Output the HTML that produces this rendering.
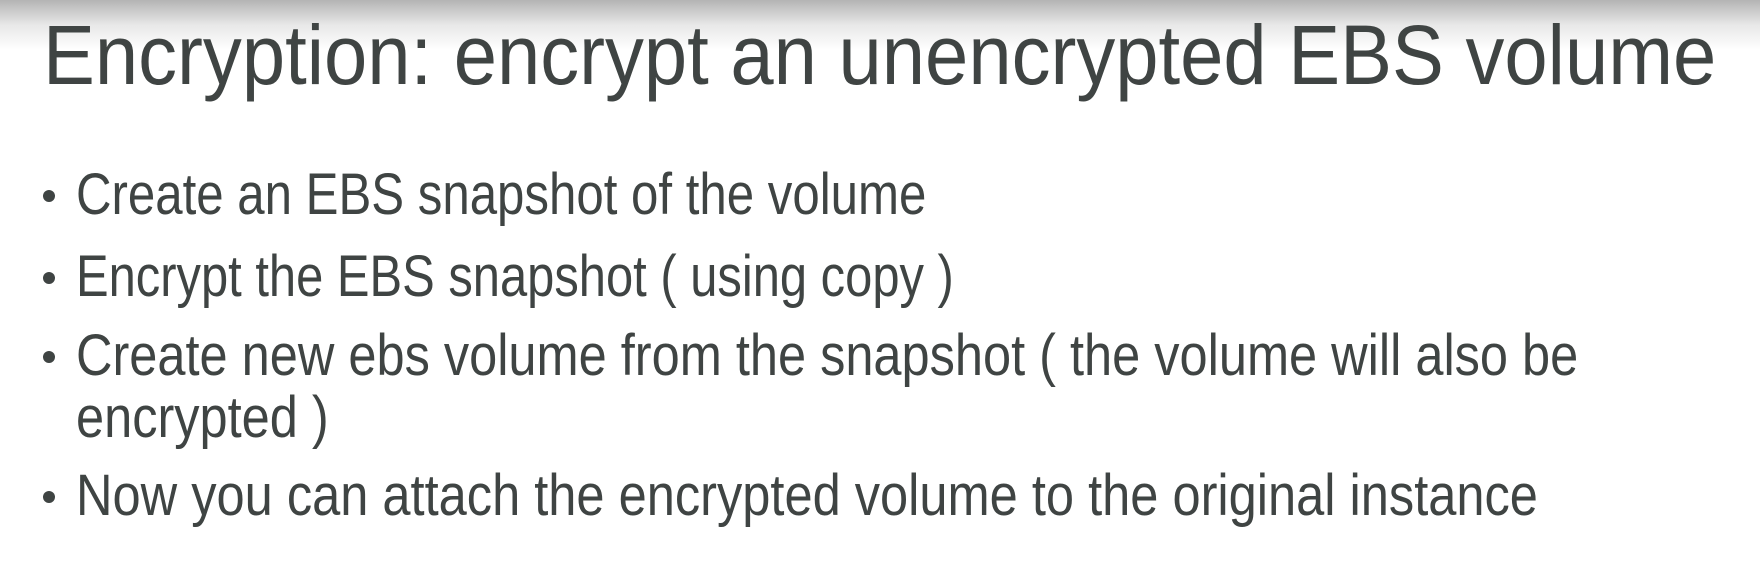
<!DOCTYPE html>
<html><head><style>
html,body{margin:0;padding:0}
body{width:1760px;height:564px;position:relative;overflow:hidden;background:#fff;font-family:"Liberation Sans",sans-serif;color:#3f4443}
.top{position:absolute;left:0;top:0;width:1760px;height:50px;background:linear-gradient(#b4b4b4,#e8e8e8 50%,#fff)}
.l{position:absolute;white-space:nowrap;line-height:1;transform-origin:0 0}
.t{font-size:84px;left:43px;top:13px;transform:scaleX(0.926)}
.b{font-size:58px;left:76px;transform:scaleX(0.87)}
.d{position:absolute;left:43px;width:12px;height:12px;border-radius:50%;background:#3f4443}
</style></head><body>
<div class="top"></div>
<div class="l t">Encryption: encrypt an unencrypted EBS volume</div>
<div class="d" style="top:190px"></div>
<div class="l b" style="top:166px;transform:scaleX(0.848)">Create an EBS snapshot of the volume</div>
<div class="d" style="top:272px"></div>
<div class="l b" style="top:248px;transform:scaleX(0.843)">Encrypt the EBS snapshot ( using copy )</div>
<div class="d" style="top:351px"></div>
<div class="l b" style="top:327px;transform:scaleX(0.871)">Create new ebs volume from the snapshot ( the volume will also be</div>
<div class="l b" style="top:389px;transform:scaleX(0.871)">encrypted )</div>
<div class="d" style="top:491px"></div>
<div class="l b" style="top:467px;transform:scaleX(0.872)">Now you can attach the encrypted volume to the original instance</div>
</body></html>
